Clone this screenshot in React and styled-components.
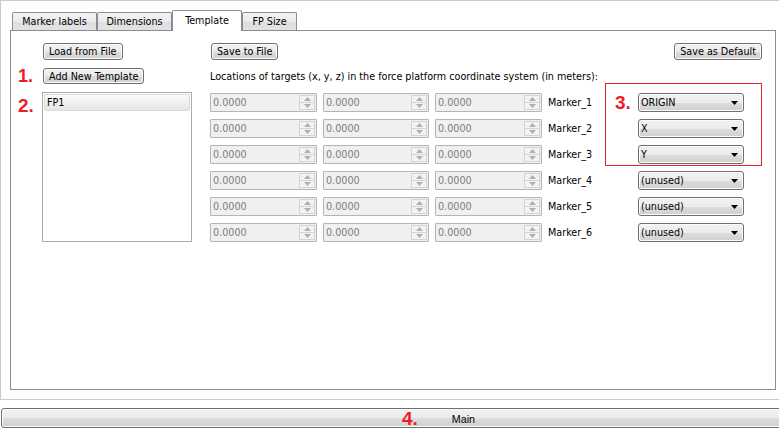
import React from 'react';
import styled, { createGlobalStyle } from 'styled-components';

const GlobalStyle = createGlobalStyle`
  html, body {
    margin: 0;
    padding: 0;
    background: #ffffff;
  }
  * {
    box-sizing: border-box;
  }
`;

const Window = styled.div`
  width: 779px;
  height: 443px;
  overflow: hidden;
  background: #ffffff;
  font-family: "DejaVu Sans Condensed", "Liberation Sans", sans-serif;
  font-size: 10.7px;
  color: #000000;
`;

const Frame = styled.div`
  height: 400px;
  border-top: 1px solid #c9cbce;
  border-left: 1px solid #c9cbce;
  border-bottom: 1px solid #c9cbce;
  padding: 9px 3px 9px 9px;
  display: flex;
  flex-direction: column;
`;

const TabBar = styled.div`
  display: flex;
  align-items: flex-end;
  height: 20px;
  padding-left: 2px;
`;

const Tab = styled.div`
  position: relative;
  width: ${({ $w }) => $w}px;
  height: ${({ $active }) => ($active ? 21 : 18)}px;
  margin-bottom: ${({ $active }) => ($active ? -1 : 0)}px;
  border: 1px solid #898c95;
  border-bottom: none;
  border-radius: 2px 2px 0 0;
  background: ${({ $active }) =>
    $active ? '#ffffff' : 'linear-gradient(#f3f3f3 0%, #ebebeb 50%, #dedede 51%, #e3e3e3 100%)'};
  z-index: ${({ $active }) => ($active ? 1 : 0)};
  display: flex;
  align-items: center;
  justify-content: center;
  padding-bottom: ${({ $active }) => ($active ? 2 : 0)}px;
  white-space: nowrap;
`;

const Pane = styled.div`
  flex: 1;
  border: 1px solid #898c95;
  background: #ffffff;
  padding: 12px 13px 0 0;
`;

const Content = styled.div`
  display: grid;
  grid-template-columns: 31px 150px 18px 1fr;
  grid-template-rows: 17px 16px auto;
  row-gap: 8px;
`;

const Button = styled.div`
  height: ${({ $h }) => $h || 17}px;
  padding: 0 5px;
  border: 1px solid #707070;
  border-radius: 3px;
  background: linear-gradient(#f2f2f2 0%, #ebebeb 50%, #dddddd 51%, #cfcfcf 100%);
  box-shadow: inset 0 0 0 1px #fbfbfb;
  display: inline-flex;
  align-items: center;
  white-space: nowrap;
`;

const LeftCell = styled.div`
  grid-column: 2;
  display: flex;
  align-items: flex-start;
  padding-left: 1px;
`;

const TopButtons = styled.div`
  grid-column: 4;
  display: flex;
  justify-content: space-between;
  padding-left: 1px;
`;

const Callout = styled.div`
  font-family: "Liberation Sans", Arial, sans-serif;
  font-weight: bold;
  font-size: ${({ $size }) => $size || 19}px;
  line-height: 1;
  color: #ed1c24;
  padding-left: ${({ $pad }) => ($pad === undefined ? 7 : $pad)}px;
  margin-top: ${({ $top }) => $top || 0}px;
`;

const Caption = styled.div`
  grid-column: 4;
  align-self: center;
  padding-top: 1px;
  white-space: nowrap;
`;

const ListBox = styled.div`
  grid-column: 2;
  height: 150px;
  border: 1px solid #a9abb0;
  padding: 1px;
  background: #ffffff;
`;

const ListItem = styled.div`
  height: 17px;
  border: 1px solid #d9d9d9;
  border-radius: 2px;
  background: linear-gradient(#fafafa, #e6e6e6);
  padding-left: 2px;
  display: flex;
  align-items: center;
`;

const MarkerArea = styled.div`
  grid-column: 4;
  position: relative;
  padding-top: 1px;
`;

const MarkerGrid = styled.div`
  display: grid;
  grid-template-columns: 107px 106px 107px 86px 104px;
  grid-auto-rows: 19px;
  column-gap: 6px;
  row-gap: 7px;
`;

const Spin = styled.div`
  display: flex;
  border: 1px solid #b5b5b5;
  background: #f0f0f0;
  border-radius: 1px;
`;

const SpinText = styled.div`
  flex: 1;
  padding-left: 2px;
  display: flex;
  align-items: center;
  color: #7c7c84;
`;

const SpinButtons = styled.div`
  width: 16px;
  margin: 1px;
  display: flex;
  flex-direction: column;
  border: 1px solid #d4d4d4;
  background: #f3f3f3;
`;

const SpinHalf = styled.div`
  flex: 1;
  display: flex;
  align-items: center;
  justify-content: center;
  border-top: ${({ $down }) => ($down ? '1px solid #d4d4d4' : 'none')};
`;

const MarkerName = styled.div`
  display: flex;
  align-items: center;
`;

const Combo = styled.div`
  display: flex;
  align-items: center;
  justify-content: space-between;
  margin-left: -2px;
  border: 1px solid #707070;
  border-radius: 3px;
  background: linear-gradient(#f2f2f2 0%, #ebebeb 50%, #dddddd 51%, #cfcfcf 100%);
  box-shadow: inset 0 0 0 1px #fbfbfb;
  padding: 0 5px 0 2px;
`;

/* red annotation frame drawn over the first three combo boxes */
const Highlight = styled.div`
  position: absolute;
  left: 395px;
  top: -9px;
  width: 157px;
  height: 83px;
  box-shadow: inset 0 0 0 1px #e8202a;
  padding: 10px 0 0 10px;
  pointer-events: none;
`;

const MainButton = styled(Button)`
  display: flex;
  margin: 8px 0 0 1px;
  width: 790px;
  height: 20px;
  padding-left: 400px;
  font-family: "Liberation Sans", Arial, sans-serif;
`;

const MainLabel = styled.span`
  margin-left: 34px;
  margin-top: 1px;
`;

const Arrow = ({ up }) => (
  <svg width="7" height="4" viewBox="0 0 7 4">
    <polygon points={up ? '3.5,0 7,4 0,4' : '0,0 7,0 3.5,4'} fill="#b0b0b0" />
  </svg>
);

const ComboArrow = () => (
  <svg width="7" height="4" viewBox="0 0 7 4">
    <polygon points="0,0 7,0 3.5,4" fill="#000000" />
  </svg>
);

const SpinBox = () => (
  <Spin>
    <SpinText>0.0000</SpinText>
    <SpinButtons>
      <SpinHalf>
        <Arrow up />
      </SpinHalf>
      <SpinHalf $down>
        <Arrow />
      </SpinHalf>
    </SpinButtons>
  </Spin>
);

const markers = [
  { name: 'Marker_1', value: 'ORIGIN' },
  { name: 'Marker_2', value: 'X' },
  { name: 'Marker_3', value: 'Y' },
  { name: 'Marker_4', value: '(unused)' },
  { name: 'Marker_5', value: '(unused)' },
  { name: 'Marker_6', value: '(unused)' },
];

const tabs = [
  { label: 'Marker labels', w: 85 },
  { label: 'Dimensions', w: 75 },
  { label: 'Template', w: 70, active: true },
  { label: 'FP Size', w: 55 },
];

const App = () => {
  return (
    <Window>
      <GlobalStyle />
      <Frame>
        <TabBar>
          {tabs.map((t) => (
            <Tab key={t.label} $w={t.w} $active={t.active}>
              {t.label}
            </Tab>
          ))}
        </TabBar>
        <Pane>
          <Content>
            <LeftCell>
              <Button>Load from File</Button>
            </LeftCell>
            <TopButtons>
              <Button>Save to File</Button>
              <Button>Save as Default</Button>
            </TopButtons>

            <Callout $size={18} $top={-1}>1.</Callout>
            <LeftCell>
              <Button $h={16}>Add New Template</Button>
            </LeftCell>
            <Caption>
              Locations of targets (x, y, z) in the force platform coordinate system (in meters):
            </Caption>

            <Callout $top={4}>2.</Callout>
            <ListBox>
              <ListItem>FP1</ListItem>
            </ListBox>
            <MarkerArea>
              <MarkerGrid>
                {markers.map((m) => (
                  <React.Fragment key={m.name}>
                    <SpinBox />
                    <SpinBox />
                    <SpinBox />
                    <MarkerName>{m.name}</MarkerName>
                    <Combo>
                      <span>{m.value}</span>
                      <ComboArrow />
                    </Combo>
                  </React.Fragment>
                ))}
              </MarkerGrid>
              <Highlight>
                <Callout $pad={0}>3.</Callout>
              </Highlight>
            </MarkerArea>
          </Content>
        </Pane>
      </Frame>
      <MainButton>
        <Callout $pad={0}>4.</Callout>
        <MainLabel>Main</MainLabel>
      </MainButton>
    </Window>
  );
};

export default App;
